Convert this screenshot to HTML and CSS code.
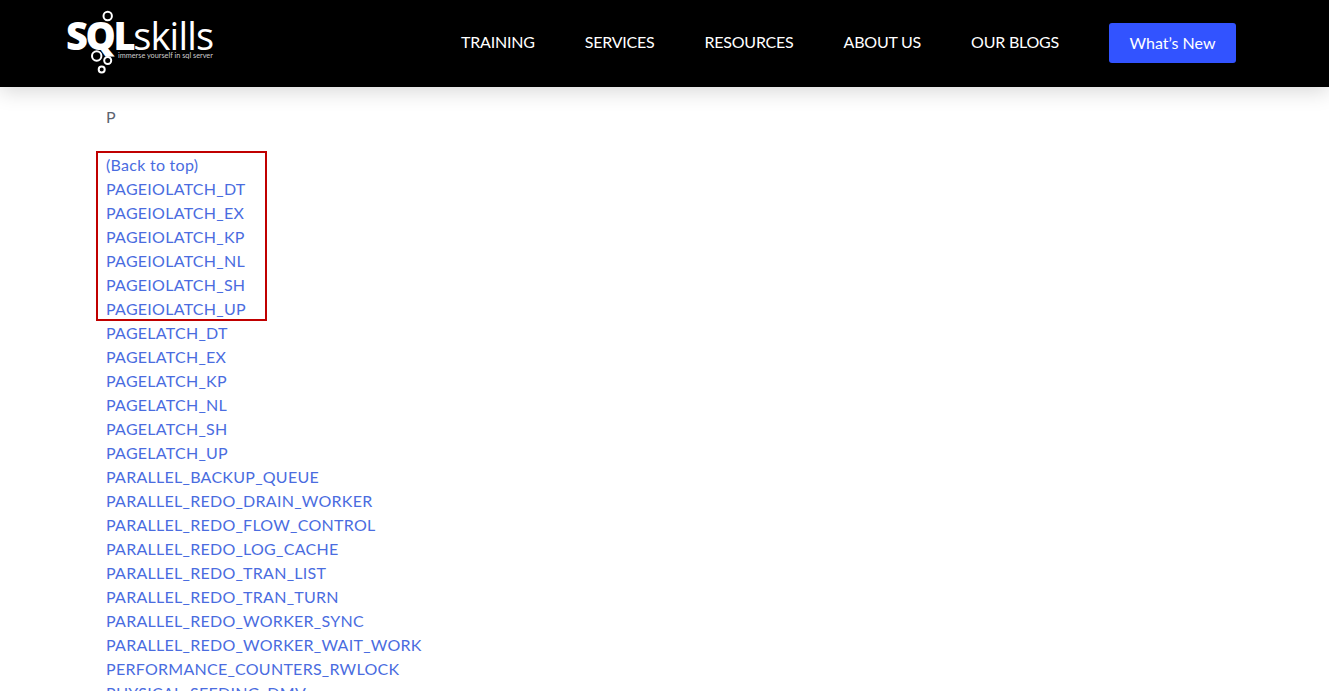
FILE: index.html
```html
<!DOCTYPE html>
<html lang="en">
<head>
<meta charset="utf-8">
<title>SQLskills Wait Types</title>
<link rel="stylesheet" href="styles.css">
</head>
<body>
<header class="site-header">
  <a class="logo" href="#">
    <svg class="logo-rings" width="60" height="76" viewBox="0 0 60 76" aria-hidden="true">
      <circle cx="41.700" cy="16" r="4.200"/>
      <circle cx="30.700" cy="56" r="4.700"/>
      <circle cx="41.700" cy="60.500" r="3.500"/>
      <circle cx="35.700" cy="69.500" r="3"/>
    </svg>
    <span class="logo-word"><b>SQL</b>skills</span>
    <span class="logo-tag">immerse yourself in sql server</span>
  </a>
  <nav class="main-nav">
    <a href="#">TRAINING</a>
    <a href="#">SERVICES</a>
    <a href="#">RESOURCES</a>
    <a href="#">ABOUT US</a>
    <a href="#">OUR BLOGS</a>
  </nav>
  <a class="cta" href="#">What’s New</a>
</header>
<main class="content">
  <p class="letter">P</p>
  <div class="list-wrap">
    <div class="highlight"></div>
    <ul class="links">
      <li><a href="#">(Back to top)</a></li>
      <li><a href="#">PAGEIOLATCH_DT</a></li>
      <li><a href="#">PAGEIOLATCH_EX</a></li>
      <li><a href="#">PAGEIOLATCH_KP</a></li>
      <li><a href="#">PAGEIOLATCH_NL</a></li>
      <li><a href="#">PAGEIOLATCH_SH</a></li>
      <li><a href="#">PAGEIOLATCH_UP</a></li>
      <li><a href="#">PAGELATCH_DT</a></li>
      <li><a href="#">PAGELATCH_EX</a></li>
      <li><a href="#">PAGELATCH_KP</a></li>
      <li><a href="#">PAGELATCH_NL</a></li>
      <li><a href="#">PAGELATCH_SH</a></li>
      <li><a href="#">PAGELATCH_UP</a></li>
      <li><a href="#">PARALLEL_BACKUP_QUEUE</a></li>
      <li><a href="#">PARALLEL_REDO_DRAIN_WORKER</a></li>
      <li><a href="#">PARALLEL_REDO_FLOW_CONTROL</a></li>
      <li><a href="#">PARALLEL_REDO_LOG_CACHE</a></li>
      <li><a href="#">PARALLEL_REDO_TRAN_LIST</a></li>
      <li><a href="#">PARALLEL_REDO_TRAN_TURN</a></li>
      <li><a href="#">PARALLEL_REDO_WORKER_SYNC</a></li>
      <li><a href="#">PARALLEL_REDO_WORKER_WAIT_WORK</a></li>
      <li><a href="#">PERFORMANCE_COUNTERS_RWLOCK</a></li>
      <li><a href="#">PHYSICAL_SEEDING_DMV</a></li>
    </ul>
  </div>
</main>
</body>
</html>
```
FILE: styles.css
```css
* { box-sizing: border-box; }
html, body { margin: 0; height: 100%; overflow: hidden; }
body {
  background: #fff;
  font-family: "Lato", "Liberation Sans", sans-serif;
  font-size: 16px;
  line-height: 24px;
  color: #5c6370;
}
a { text-decoration: none; }

.site-header {
  height: 87px;
  background: #000;
  display: flex;
  align-items: center;
  padding: 0 93px 1px 66px;
  box-shadow: 0 4px 20px rgba(0, 0, 0, .16);
  position: relative;
}
.logo {
  position: relative;
  display: block;
  width: 150px;
  height: 87px;
  color: #fff;
  flex: none;
  align-self: flex-start;
}
.logo-rings { position: absolute; left: 0; top: 0; fill: none; stroke: #fff; stroke-width: 2; }
.logo-word {
  position: absolute;
  left: 0;
  top: 20px;
  font-family: "Open Sans", sans-serif;
  font-size: 38px;
  font-weight: 500;
  line-height: 30px;
  letter-spacing: -.8px;
  white-space: nowrap;
}
.logo-word b { font-weight: 800; letter-spacing: -2.400px; }
.logo-tag {
  position: absolute;
  left: 52px;
  top: 51px;
  font-size: 7.300px;
  line-height: 10px;
  white-space: nowrap;
  color: #ccc;
}
.main-nav {
  margin-left: auto;
  margin-bottom: 2px;
  display: flex;
  gap: 50px;
}
.main-nav a { color: #fff; font-size: 16px; letter-spacing: -.22px; white-space: nowrap; }
.cta {
  margin-left: 50px;
  width: 127px;
  height: 40px;
  background: #3253ff;
  border-radius: 3px;
  color: #fff;
  display: flex;
  align-items: center;
  justify-content: center;
  flex: none;
}

.content { padding: 18px 0 0 106px; }
.letter { margin: 0 0 24px; height: 24px; letter-spacing: .27px; }
.list-wrap { position: relative; }
.links { list-style: none; margin: 0; padding: 0; }
.links a { color: #4a6ce0; letter-spacing: .27px; }
.highlight {
  position: absolute;
  left: -10px;
  top: -2px;
  width: 171px;
  height: 170px;
  border: 2px solid #c00000;
}
```
